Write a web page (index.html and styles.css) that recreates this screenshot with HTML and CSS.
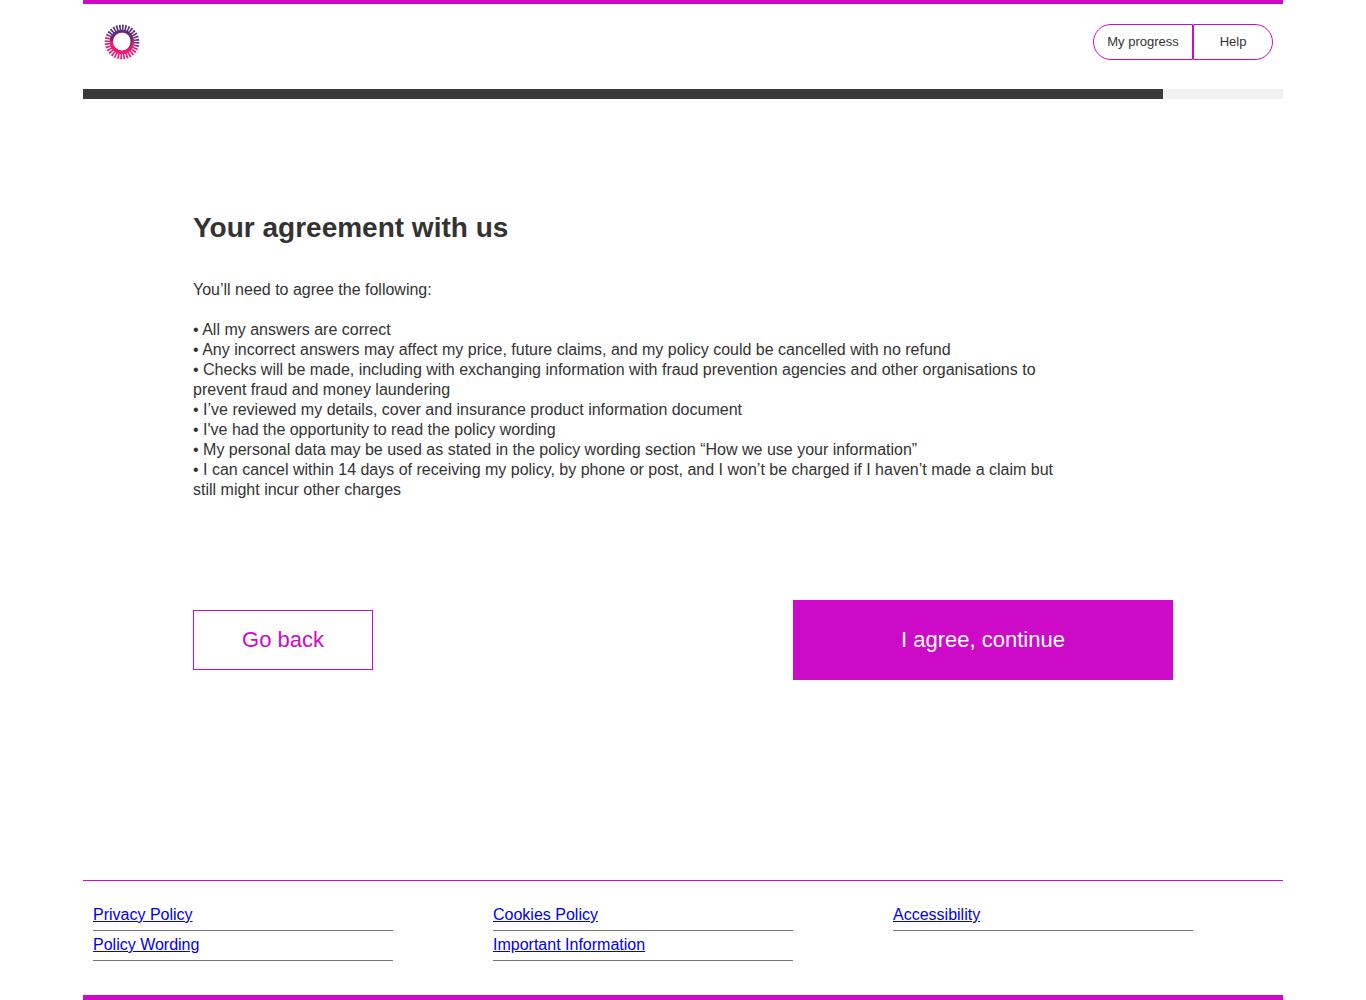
FILE: index.html
```html
<!DOCTYPE html>
<html lang="en">
<head>
  <meta charset="utf-8">
  <meta name="viewport" content="width=device-width, initial-scale=1">
  <title>Your agreement with us</title>
  <link rel="stylesheet" href="styles.css">
</head>
<body>
  <div class="page">
    <header class="header">
      <a class="logo" href="#" aria-label="Home">
        <svg width="36" height="36" viewBox="0 0 36 36" aria-hidden="true">
          <defs>
            <linearGradient id="sun" x1="0" y1="0" x2="0" y2="36" gradientUnits="userSpaceOnUse" gradientTransform="rotate(20 18 18)">
              <stop offset="0.44" stop-color="#57307a"/>
              <stop offset="0.48" stop-color="#ee1a73"/>
            </linearGradient>
          </defs>
          <circle cx="18" cy="18" r="14.5" fill="none" stroke="url(#sun)" stroke-width="5.6" pathLength="64" stroke-dasharray="1.15 0.85"/>
          <path fill="#ee1a73" fill-rule="evenodd" d="M18 5.800a12.2 12.2 0 1 1 0 24.4a12.2 12.2 0 1 1 0-24.4zM18 8.500a9 9 0 1 0 0 18a9 9 0 1 0 0-18z"/>
          <path fill="#57307a" d="M5.900 18.500C5.500 10.600 11 5.800 18 5.800C24.500 5.800 28.300 9.500 28.600 14.500C28.800 18.500 27 23 24 24.700C28.500 19 27.500 8.500 18 8.500C12 8.500 9 12.500 9 16.800C7.500 16.500 6.500 17 5.900 18.500z"/>
        </svg>
      </a>
      <nav class="tools" aria-label="Tools">
        <button class="tool" type="button">My progress</button>
        <button class="tool" type="button">Help</button>
      </nav>
    </header>
    <div class="progress" role="progressbar" aria-label="Progress" aria-valuemin="0" aria-valuemax="100" aria-valuenow="90">
      <div class="progress-fill" style="width: 90%"></div>
    </div>
    <main class="main">
      <h1 class="title">Your agreement with us</h1>
      <div class="terms">
        <p class="intro">You’ll need to agree the following:</p>
        <ul class="list">
          <li>• All my answers are correct</li>
          <li>• Any incorrect answers may affect my price, future claims, and my policy could be cancelled with no refund</li>
          <li>• Checks will be made, including with exchanging information with fraud prevention agencies and other organisations to prevent fraud and money laundering</li>
          <li>• I’ve reviewed my details, cover and insurance product information document</li>
          <li>• I've had the opportunity to read the policy wording</li>
          <li>• My personal data may be used as stated in the policy wording section “How we use your information”</li>
          <li>• I can cancel within 14 days of receiving my policy, by phone or post, and I won’t be charged if I haven’t made a claim but still might incur other charges</li>
        </ul>
      </div>
      <div class="actions">
        <button class="back" type="button">Go back</button>
        <button class="agree" type="button">I agree, continue</button>
      </div>
    </main>
    <footer class="footer">
      <div class="column">
        <div class="entry"><a href="#">Privacy Policy</a></div>
        <div class="entry"><a href="#">Policy Wording</a></div>
      </div>
      <div class="column">
        <div class="entry"><a href="#">Cookies Policy</a></div>
        <div class="entry"><a href="#">Important Information</a></div>
      </div>
      <div class="column">
        <div class="entry"><a href="#">Accessibility</a></div>
      </div>
    </footer>
  </div>
</body>
</html>
```
FILE: styles.css
```css
* {
  box-sizing: border-box;
}

body {
  margin: 0;
  background: #fff;
  color: #333;
  font-family: "Liberation Sans", Arial, sans-serif;
  font-size: 16px;
  line-height: 20px;
}

button {
  font-family: inherit;
  cursor: pointer;
}

.page {
  display: flex;
  flex-direction: column;
  max-width: 1200px;
  min-height: 100vh;
  margin: 0 auto;
  border-top: 4px solid #cc0ac8;
  border-bottom: 5px solid #cc0ac8;
}

.header {
  display: flex;
  justify-content: space-between;
  align-items: flex-start;
  padding: 20px 10px 29px 21px;
}

.logo,
.logo svg {
  display: block;
}

.tools {
  display: flex;
}

.tool {
  width: 80px;
  height: 36px;
  padding: 0 0 2px;
  border: 1px solid #cc0ac8;
  border-radius: 0 18px 18px 0;
  background: #fff;
  color: #333;
  font-size: 13px;
}

.tool:first-child {
  width: 100px;
  border-radius: 18px 0 0 18px;
}

.progress {
  background: #f2f1f0;
}

.progress-fill {
  height: 10px;
  background: #373a38;
}

.main {
  flex: 1;
  padding: 113px 110px 40px;
}

.title {
  margin: 0 0 36px;
  font-size: 28px;
  line-height: 32px;
}

.terms {
  max-width: 880px;
}

.intro {
  margin: 0 0 20px;
}

.list {
  margin: 0;
  padding: 0;
  list-style: none;
}

.actions {
  display: flex;
  flex-wrap: wrap;
  justify-content: space-between;
  align-items: center;
  gap: 20px;
  margin-top: 100px;
}

.back,
.agree {
  padding: 0;
  border: 1px solid #cc0ac8;
  font-size: 22px;
}

.back {
  width: 180px;
  height: 60px;
  background: #fff;
  color: #cc0ac8;
}

.agree {
  width: 380px;
  height: 80px;
  background: #cc0ac8;
  color: #fff;
}

.footer {
  display: grid;
  grid-template-columns: repeat(3, 1fr);
  padding: 20px 0 34px;
  border-top: 1px solid #cc0ac8;
}

.column {
  padding: 0 90px 0 10px;
}

.entry {
  padding: 4px 0 5px;
  border-bottom: 1px solid #767676;
}

.entry a {
  color: #00e;
}
```
